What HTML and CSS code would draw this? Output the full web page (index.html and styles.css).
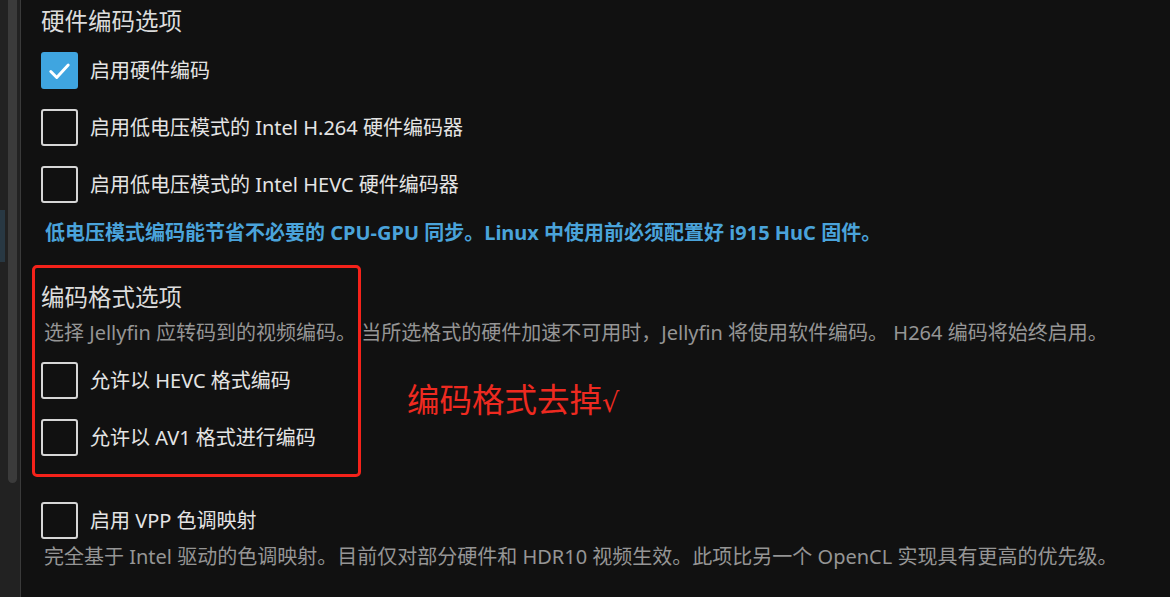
FILE: index.html
```html
<!DOCTYPE html>
<html lang="zh-CN">
<head>
<meta charset="utf-8">
<title>硬件编码选项</title>
<link rel="stylesheet" href="styles.css">
</head>
<body>
<div class="page">
  <aside class="side">
    <div class="side-nav"><div class="side-active"></div></div>
    <div class="scroll-track"><div class="scroll-thumb"></div></div>
    <div class="side-gap"></div>
  </aside>
  <main class="main">
    <h3 class="title first">硬件编码选项</h3>
    <label class="row">
      <span class="box checked">
        <svg viewBox="0 0 36 36" width="36" height="36"><polyline points="8.5,18.5 15,25 27.5,11.5" fill="none" stroke="#fff" stroke-width="3.2" stroke-linecap="round" stroke-linejoin="round"/></svg>
      </span>
      <span class="label">启用硬件编码</span>
    </label>
    <label class="row">
      <span class="box"></span>
      <span class="label">启用低电压模式的 Intel H.264 硬件编码器</span>
    </label>
    <label class="row">
      <span class="box"></span>
      <span class="label">启用低电压模式的 Intel HEVC 硬件编码器</span>
    </label>
    <div class="note">低电压模式编码能节省不必要的 CPU-GPU 同步。Linux 中使用前必须配置好 i915 HuC 固件。</div>

    <section class="formats">
      <div class="redframe"></div>
      <div class="annotation">编码格式去掉<span class="tick">√</span></div>
      <h3 class="title">编码格式选项</h3>
      <div class="desc">选择 Jellyfin 应转码到的视频编码。 当所选格式的硬件加速不可用时，Jellyfin 将使用软件编码。 H264 编码将始终启用。</div>
      <label class="row">
        <span class="box"></span>
        <span class="label">允许以 HEVC 格式编码</span>
      </label>
      <label class="row last">
        <span class="box"></span>
        <span class="label">允许以 AV1 格式进行编码</span>
      </label>
    </section>

    <label class="row vpp">
      <span class="box"></span>
      <span class="label">启用 VPP 色调映射</span>
    </label>
    <div class="desc">完全基于 Intel 驱动的色调映射。目前仅对部分硬件和 HDR10 视频生效。此项比另一个 OpenCL 实现具有更高的优先级。</div>
  </main>
</div>
</body>
</html>
```

FILE: styles.css
```css
html, body {
  margin: 0;
  padding: 0;
  background: #111111;
  height: 100%;
  overflow: hidden;
}
body {
  font-family: "Noto Sans", "Noto Sans CJK SC", sans-serif;
  color: #e2e2e2;
}
.page {
  display: flex;
  height: 597px;
}
.side {
  display: flex;
  width: 20px;
  background: #222222;
  border-right: 1px solid #3a3a3a;
  flex-shrink: 0;
}
.side-nav {
  width: 8px;
  padding-top: 210px;
}
.side-active {
  width: 5px;
  height: 52px;
  background: #283843;
}
.scroll-track {
  width: 9px;
}
.scroll-thumb {
  width: 9px;
  height: 483px;
  background: #3b3b3b;
  border-radius: 0 0 5px 5px;
}
.side-gap {
  width: 3px;
}
.main {
  flex: 1;
  padding-left: 20px;
  display: flex;
  flex-direction: column;
  align-items: flex-start;
}
.title {
  margin: 0;
  font-size: 23.5px;
  font-weight: 400;
  line-height: 28px;
  color: #dcdcdc;
}
.title.first {
  margin-top: 7px;
  margin-bottom: 17px;
}
.row {
  display: flex;
  align-items: center;
  height: 37px;
  margin-bottom: 20px;
  cursor: pointer;
}
.box {
  box-sizing: border-box;
  width: 37px;
  height: 37px;
  border: 2px solid #d6d6d6;
  border-radius: 3px;
  flex-shrink: 0;
  display: flex;
  align-items: center;
  justify-content: center;
}
.box.checked {
  background: #3fa5e0;
  border-color: #3fa5e0;
}
.box svg {
  display: block;
}
.label {
  margin-left: 12px;
  font-size: 20px;
  line-height: 28px;
  color: #e4e4e4;
}
.note {
  margin-top: -4px;
  padding-left: 4px;
  font-size: 20px;
  line-height: 28px;
  font-weight: 700;
  color: #4aa3da;
  white-space: nowrap;
}
.formats {
  position: relative;
  margin-top: 36px;
  display: flex;
  flex-direction: column;
  align-items: flex-start;
}
.redframe {
  position: absolute;
  left: -9px;
  top: -18px;
  width: 329px;
  height: 212px;
  box-sizing: border-box;
  border: 3px solid #f5221a;
  border-radius: 5px;
  pointer-events: none;
}
.annotation {
  position: absolute;
  left: 366px;
  top: 97px;
  font-size: 32.5px;
  line-height: 40px;
  color: #ee2a20;
  white-space: nowrap;
}
.tick {
  font-family: "DejaVu Sans", sans-serif;
  font-size: 27px;
}
.desc {
  padding-left: 3px;
  font-size: 20px;
  line-height: 28px;
  color: #959595;
  white-space: nowrap;
}
.formats .desc {
  margin-top: 8px;
  margin-bottom: 15px;
}
.row.last {
  margin-bottom: 0;
}
.row.vpp {
  margin-top: 46px;
  margin-bottom: 4px;
}
```
